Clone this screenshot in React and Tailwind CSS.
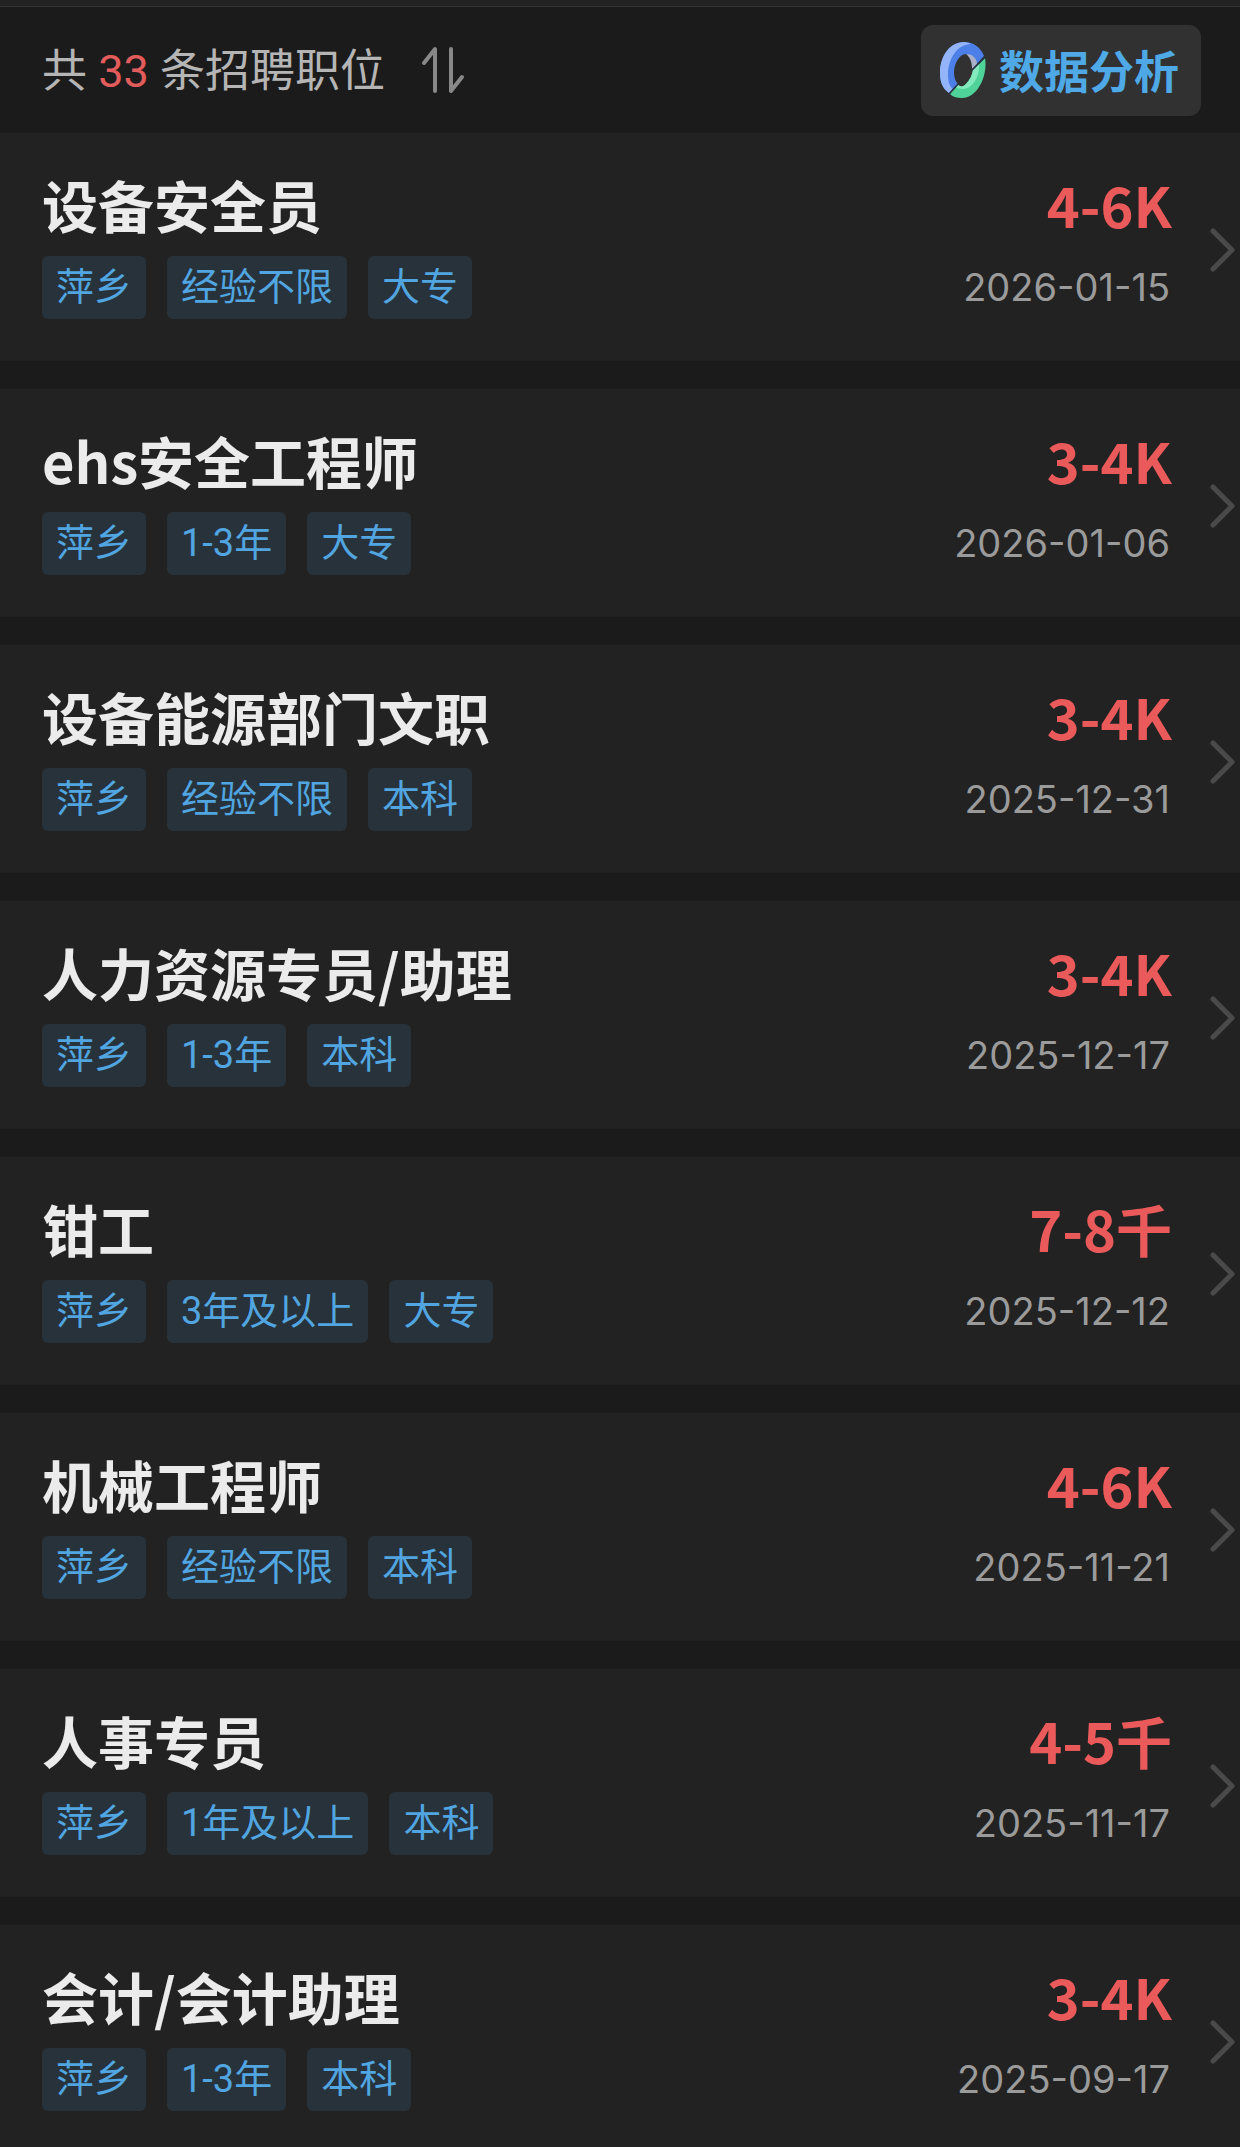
import React, { useState } from 'react';

const JOBS = [
  { id: 1, title: '设备安全员', tags: ['萍乡', '经验不限', '大专'], salary: '4-6K', date: '2026-01-15' },
  { id: 2, title: 'ehs安全工程师', tags: ['萍乡', '1-3年', '大专'], salary: '3-4K', date: '2026-01-06' },
  { id: 3, title: '设备能源部门文职', tags: ['萍乡', '经验不限', '本科'], salary: '3-4K', date: '2025-12-31' },
  { id: 4, title: '人力资源专员/助理', tags: ['萍乡', '1-3年', '本科'], salary: '3-4K', date: '2025-12-17' },
  { id: 5, title: '钳工', tags: ['萍乡', '3年及以上', '大专'], salary: '7-8千', date: '2025-12-12' },
  { id: 6, title: '机械工程师', tags: ['萍乡', '经验不限', '本科'], salary: '4-6K', date: '2025-11-21' },
  { id: 7, title: '人事专员', tags: ['萍乡', '1年及以上', '本科'], salary: '4-5千', date: '2025-11-17' },
  { id: 8, title: '会计/会计助理', tags: ['萍乡', '1-3年', '本科'], salary: '3-4K', date: '2025-09-17' },
];

const SortIcon = () => (
  <svg className="h-12 w-11" viewBox="0 0 44 48" fill="none" stroke="currentColor" strokeWidth="4" strokeLinecap="round" strokeLinejoin="round">
    <path d="M3 17L14 3V45" />
    <path d="M30 45V3M30 45L41 31" />
  </svg>
);

// 立体圆环图标
const ChartIcon = () => (
  <svg className="h-14 w-12" viewBox="0 0 48 56" fill="none">
    {/* 蓝色部分 */}
    <path d="M10 51C3 46 1 39 1 31C1 14 11 0 25 0C35 0 42 6 45 14L34 26C33 17 31 12 27 12C20 12 15 22 15 31C15 36 17 40 19 42Z" fill="#4c80e8" />
    <path d="M10 51C3 46 1 39 1 31C1 14 11 0 25 0C28 0 30 1 32 2C19 2 9 16 9 33C9 40 11 45 14 47Z" fill="#94b4fa" />
    <path d="M27 12C34 12 38 17 38 22L33 27C33 20 31 15 27 12Z" fill="#a9b0c8" />
    {/* 绿色部分 */}
    <path d="M11 52L19 43C22 45 24 45 27 42C31 38 33 33 34 28L46 16C49 33 39 56 23 56C18 56 14 55 11 52Z" fill="#4fd399" />
    <path d="M19 43C22 45 24 45 27 42C31 38 33 33 34 28L40 22C41 35 33 47 24 47C21 47 18 46 17 45Z" fill="#84e9bd" />
    <path d="M10 52L19 42M33 28L46 15" stroke="#263246" strokeWidth="1.5" />
  </svg>
);

const ArrowIcon = () => (
  <svg className="h-12 w-7 shrink-0" viewBox="0 0 28 48" fill="none" stroke="#4a4a4a" strokeWidth="5" strokeLinecap="round" strokeLinejoin="round">
    <path d="M5 6L24 25L5 44" />
  </svg>
);

const JobCard = ({ job }) => (
  <li className="shrink-0 bg-[#222222]">
    <a href={`#job-${job.id}`} className="flex h-[228px] items-center pl-[42px]">
      <div className="flex min-w-0 flex-1 flex-col gap-5 pb-1">
        <div className="flex items-center justify-between font-bold text-[56px] leading-[64px]">
          <h2 className="text-[#ebebeb]">{job.title}</h2>
          <span className="text-[#ea5a5a]">{job.salary}</span>
        </div>
        <div className="flex items-center justify-between">
          <div className="flex gap-[21px]">
            {job.tags.map((tag) => (
              <span
                key={tag}
                className="rounded-md bg-[#27323a] px-3.5 text-[38px] leading-[63px] text-[#51a5e0] font-['Roboto','Noto_Sans_CJK_SC',sans-serif]"
              >
                {tag}
              </span>
            ))}
          </div>
          <time className="pr-0.5 text-[38px] leading-[63px] text-[#9b9b9b] font-['Inter','Noto_Sans_CJK_SC',sans-serif]">
            {job.date}
          </time>
        </div>
      </div>
      <div className="flex w-[68px] justify-end pr-1 pt-1">
        <ArrowIcon />
      </div>
    </a>
  </li>
);

const App = () => {
  const [newestFirst, setNewestFirst] = useState(true);
  const jobs = newestFirst ? JOBS : [...JOBS].reverse();

  return (
    <div className="flex h-screen flex-col overflow-hidden bg-[#1b1b1b] font-['Noto_Sans_CJK_SC',sans-serif]">
      <div className="h-[7px] shrink-0 border-b border-[#343434] bg-[#222222]" />

      {/* 顶部栏 */}
      <header className="flex h-[126px] shrink-0 items-center justify-between pl-[42px] pr-[39px]">
        <div className="flex items-center gap-9">
          <p className="pt-1 text-[45px] leading-[64px] text-[#b5b5b5] font-['Roboto','Noto_Sans_CJK_SC',sans-serif]">
            共 <span className="text-[#e25c5c]">33</span> 条招聘职位
          </p>
          <button type="button" aria-label="排序" onClick={() => setNewestFirst(!newestFirst)} className="text-[#888888]">
            <SortIcon />
          </button>
        </div>
        <button type="button" className="flex h-[91px] items-center gap-3 rounded-xl bg-[#313131] pl-[18px] pr-[22px] text-[45px] font-bold leading-[64px] text-[#4ea9e6]">
          <ChartIcon />
          数据分析
        </button>
      </header>

      {/* 职位列表 */}
      <ul className="flex flex-col gap-7">
        {jobs.map((job) => (
          <JobCard key={job.id} job={job} />
        ))}
      </ul>
    </div>
  );
};

export default App;
